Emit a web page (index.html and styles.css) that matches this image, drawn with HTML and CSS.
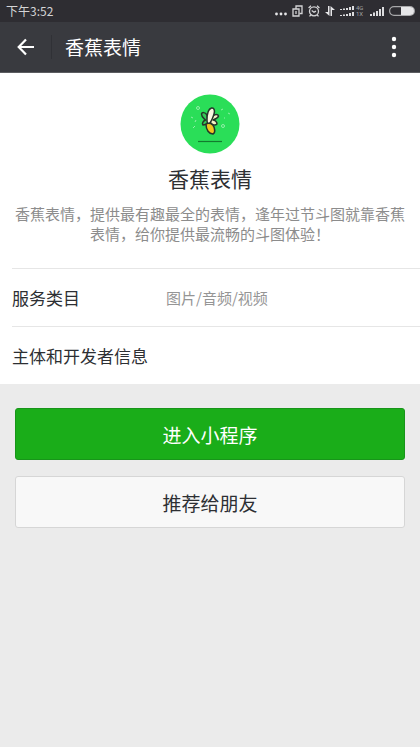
FILE: index.html
```html
<!DOCTYPE html>
<html lang="zh-CN">
<head>
<meta charset="utf-8">
<meta name="viewport" content="width=device-width, initial-scale=1">
<title>香蕉表情</title>
<link rel="stylesheet" href="styles.css">
</head>
<body>
<div class="status">
  <span class="time">下午3:52</span>
  <div class="indicators">
    <svg width="12" height="12" viewBox="0 0 12 12" fill="#e6e6e8"><circle cx="1.5" cy="9" r="1.4"/><circle cx="6" cy="9" r="1.4"/><circle cx="10.5" cy="9" r="1.4"/></svg>
    <svg width="11" height="12" viewBox="0 0 11 12" fill="none" stroke="#d4d4d6" stroke-width="1.300"><path d="M4 4V1h6v7.500H7.500"/><path d="M1 4h6v7H1zM4 6v3"/></svg>
    <svg width="12" height="12" viewBox="0 0 12 12" fill="none" stroke="#d4d4d6" stroke-width="1.300"><circle cx="6" cy="6.300" r="4.500"/><path d="M3.700 5.500L6 7.200l2-1M.6 3L3 .8M11.400 3L9 .8M2.800 10L1.500 11.400M9.200 10l1.300 1.400"/></svg>
    <svg width="10" height="12" viewBox="0 0 10 12" fill="#e6e6e8"><path d="M3 1h1.500v10L0 7h3zM5.500 11V1L10 5H7v6z"/></svg>
    <div class="dual">
      <svg width="15" height="12" viewBox="0 0 15 12" fill="#dcdcde"><path d="M0 4h2v1H0zM3 3.500h2V5H3zM6 3h2v2H6zM9 2h2v3H9zM12 1h2v4h-2zM0 10h2v1H0zM3 9.500h2V11H3zM6 9h2v2H6zM9 8h2v3H9zM12 7h2v4h-2z"/></svg>
      <span class="net"><span>4G</span><span>1X</span></span>
    </div>
    <svg width="14" height="12" viewBox="0 0 14 12" fill="#dcdcde"><path d="M0 9h2v2H0zM3 7.500h2V11H3zM6 6h2v5H6zM9 4h2v7H9zM12 2h2v9h-2z"/></svg>
    <svg width="26" height="12" viewBox="0 0 26 12"><rect x=".6" y="1.600" width="24.800" height="8.800" rx="4.400" fill="none" stroke="#a8a8aa" stroke-width="1.200"/><path d="M12 2h9a4 4 0 010 8h-9z" fill="#e6e6e8"/></svg>
  </div>
</div>
<header class="bar">
  <button class="icon-btn back" aria-label="返回"><svg width="18" height="18" viewBox="0 0 18 18" fill="none" stroke="#fff" stroke-width="2.200"><path d="M17 9H2M9 1.500L1.700 9 9 16.500"/></svg></button>
  <span class="title">香蕉表情</span>
  <button class="icon-btn more" aria-label="更多"><svg width="6" height="22" viewBox="0 0 6 22" fill="#fff"><circle cx="3" cy="3" r="2.200"/><circle cx="3" cy="11" r="2.200"/><circle cx="3" cy="19" r="2.200"/></svg></button>
</header>
<main>
  <section class="card">
    <div class="profile">
      <svg class="logo" width="60" height="60" viewBox="0 0 60 60">
        <circle cx="30" cy="30" r="29.500" fill="#2ade58"/>
        <g fill="none" stroke="#93efa9" stroke-width="1"><path d="M11 23l2 1M13 34l2-2M15 28l1-2M41 16l2-1M48 19l2 1M44 24h1"/><circle cx="18" cy="14" r="1.500"/><circle cx="43" cy="32" r="1.500"/></g>
        <g stroke="#26352a" stroke-width="1.500" stroke-linejoin="round" stroke-linecap="round">
          <path d="M27 21c-2-3-5-3-5.500-1 0 3 2 4 4 6-2 1-4 3-2.500 5 2 0 4-1 5-2z" fill="#35c956"/>
          <path d="M33 22c2-2 5-2 5.500 0-.5 2-3 3-5.500 4 2 0 4 2 4 4-2 2-5 1-7-2z" fill="#f5f3c4"/>
          <path d="M27 26c0-5 1-11 4.500-12 3-.5 3.500 3 2.500 6s-2 7-5 10c-2 0-2-2-2-4z" fill="#fbf8e2"/>
          <path d="M26 30c3-2 7 0 8 3 1 3 1 6-1 7-4 0-7-4-7-10z" fill="#f1c51f"/>
        </g>
        <path d="M18 47.500h24" stroke="#137b2e" stroke-width="1.200"/>
      </svg>
      <h1>香蕉表情</h1>
      <p>香蕉表情，提供最有趣最全的表情，逢年过节斗图就靠香蕉表情，给你提供最流畅的斗图体验！</p>
    </div>
    <dl class="rows">
      <div class="row"><dt>服务类目</dt><dd>图片/音频/视频</dd></div>
      <div class="row"><dt>主体和开发者信息</dt></div>
    </dl>
  </section>
  <div class="actions">
    <button class="btn primary">进入小程序</button>
    <button class="btn">推荐给朋友</button>
  </div>
</main>
</body>
</html>
```

FILE: styles.css
```css
* { box-sizing: border-box; }
body {
  margin: 0;
  background: #ebebeb;
  color: #2d2f33;
  font-family: "Noto Sans CJK SC", "Noto Sans", sans-serif;
}
svg { display: block; flex: none; }
button { font-family: inherit; cursor: pointer; }
.status {
  display: flex;
  justify-content: space-between;
  align-items: center;
  height: 22px;
  padding: 0 5px 0 6px;
  background: #2e2d32;
  color: #d4d4d6;
}
.time { font-size: 12px; line-height: 22px; }
.indicators { display: flex; align-items: center; gap: 5px; }
.dual { display: flex; align-items: center; gap: 1px; }
.net {
  display: flex;
  flex-direction: column;
  width: 9px;
  font-family: Roboto, sans-serif;
  font-size: 6px;
  line-height: 6px;
  color: #a0a0a4;
}
.bar {
  display: flex;
  align-items: center;
  height: 51px;
  background: #393a3f;
  border-bottom: 1px solid #5c5d61;
  color: #fff;
}
.icon-btn {
  display: flex;
  align-items: center;
  justify-content: center;
  height: 24px;
  padding: 0;
  border: 0;
  background: none;
}
.back { width: 52px; border-right: 1px solid #303136; }
.title { flex: 1; padding-left: 13px; font-size: 19px; line-height: 28px; }
.more { width: 52px; }
.card { background: #fff; }
.profile {
  display: flex;
  flex-direction: column;
  align-items: center;
  padding: 21px 15px 24px;
  text-align: center;
}
h1 { margin: 8px 0 10px; font-size: 21px; font-weight: 400; line-height: 32px; }
p { margin: 0; color: #8c8c8c; font-size: 15px; line-height: 20px; }
.rows { margin: 0 0 0 12px; }
.row {
  display: flex;
  align-items: center;
  height: 58px;
  border-top: 1px solid #e6e6e6;
}
dt { min-width: 154px; font-size: 17px; line-height: 24px; }
dd { margin: 0; color: #959595; font-size: 15px; line-height: 24px; }
.actions {
  display: flex;
  flex-direction: column;
  gap: 16px;
  padding: 24px 15px;
}
.btn {
  height: 52px;
  padding: 0;
  border: 1px solid #d6d6d6;
  border-radius: 3px;
  background: #f8f8f8;
  color: #2d2f33;
  font-size: 19px;
}
.primary { background: #1aad19; border-color: #18951a; color: #fff; }
```
